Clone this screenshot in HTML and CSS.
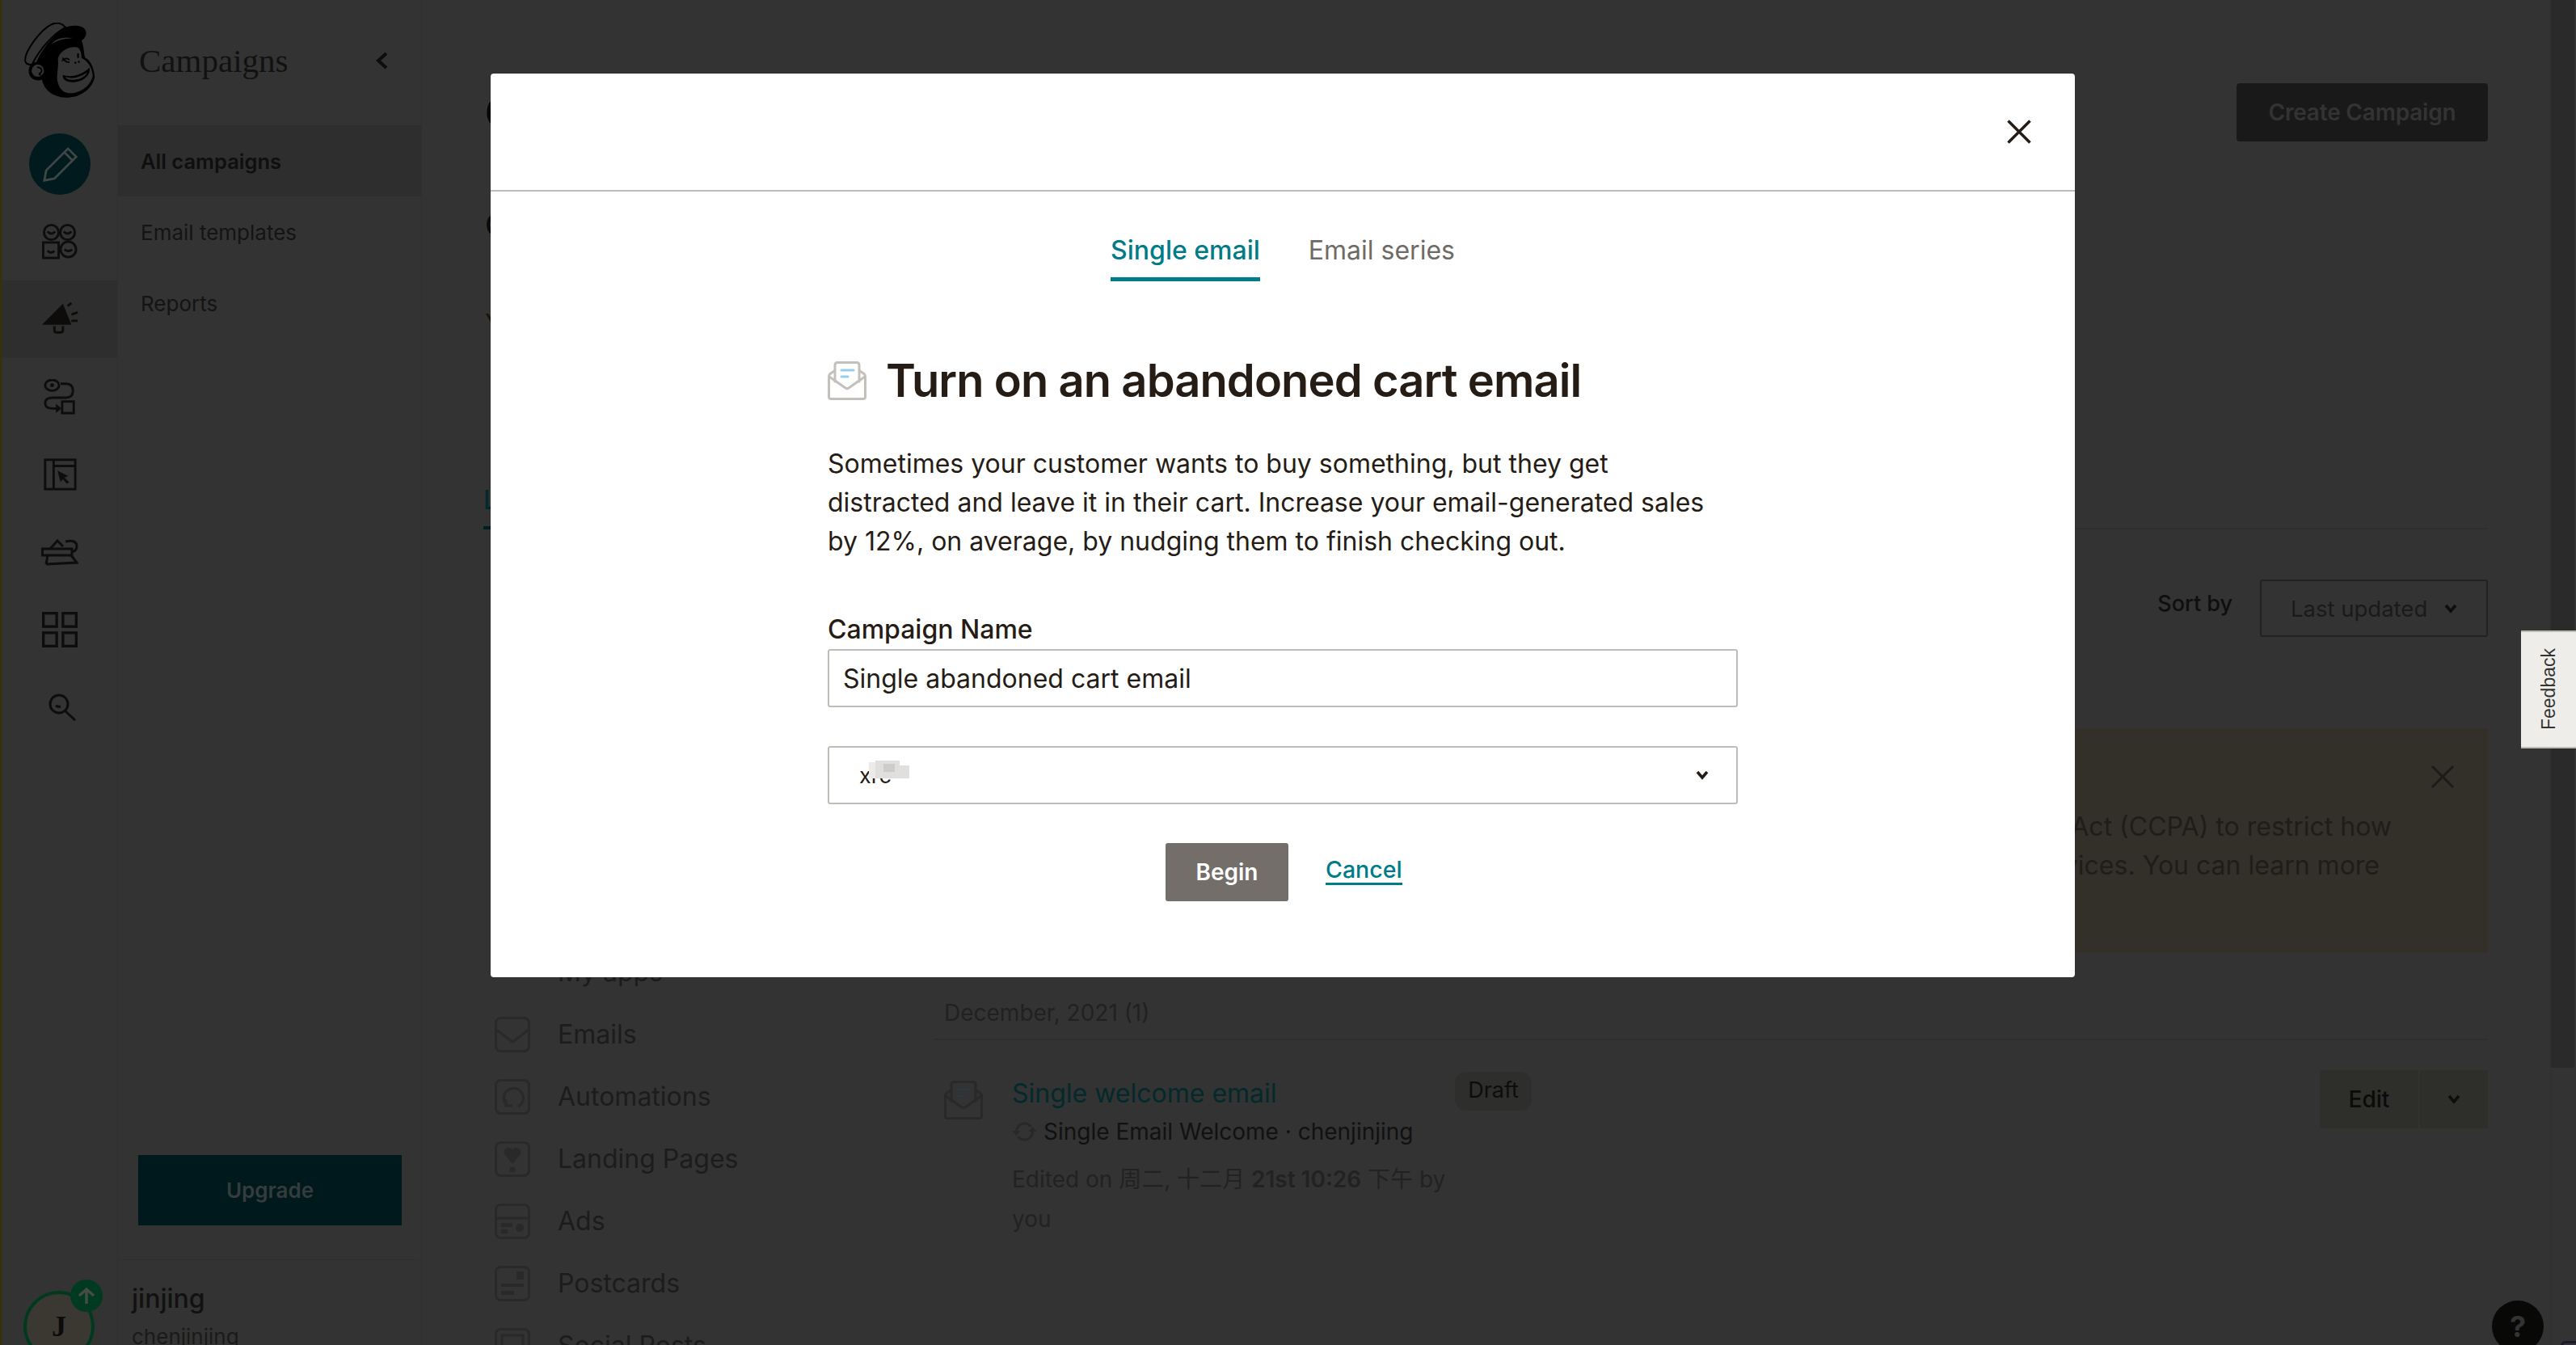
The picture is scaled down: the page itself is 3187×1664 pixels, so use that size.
FILE: index.html
```html
<!DOCTYPE html>
<html lang="en">
<head>
<meta charset="utf-8">
<title>Campaigns</title>
<link rel="stylesheet" href="styles.css">
</head>
<body>
<div class="app">
  <aside class="rail">
    <div class="rail-logo">
      <svg class="logo" viewBox="90 83 264 280">
        <path fill="#333" stroke="#000" stroke-width="6" d="M93 225C90 190 150 110 190 90C210 80 230 85 243 100C200 125 150 175 118 240C105 240 94 235 93 225Z"/>
        <path fill="#000" d="M243 100C270 90 318 90 320 120C320 138 310 145 303 150C315 180 310 205 318 215C340 225 350 260 352 285C345 330 295 365 245 362C195 360 165 335 155 295C130 305 105 290 106 260C108 240 120 232 135 230C150 190 195 130 243 100Z"/>
        <circle cx="140" cy="262" r="23" fill="#333"/>
        <path fill="none" stroke="#000" stroke-width="5" d="M137 250C155 248 160 265 147 272C143 274 148 280 152 276"/>
        <path fill="#333" d="M190 163C205 145 235 132 270 142C240 140 215 150 190 163Z"/>
        <path fill="#333" d="M215 220C218 195 250 170 285 175C298 178 303 195 303 215C325 225 342 250 345 280C335 325 290 350 250 345C225 340 210 310 212 280C213 260 218 240 215 220Z"/>
        <path fill="none" stroke="#000" stroke-width="5" d="M230 226C240 214 250 214 258 222M232 214C240 226 250 232 258 230"/>
        <path stroke="#000" stroke-width="7" stroke-linecap="round" d="M290 200V212M280 232V233M293 229V230"/>
        <path fill="#000" d="M233 278C265 290 310 275 332 250C340 275 310 305 270 305C245 305 232 295 233 278Z"/>
        <path fill="#333" d="M243 285C270 295 300 285 325 268C315 290 285 297 265 296C255 296 245 292 243 285Z"/>
      </svg>
    </div>
    <div class="rail-item">
      <span class="pen-circle">
        <svg class="icon-pen" viewBox="0 0 48 48"><path fill="none" stroke="#3e4646" stroke-width="2.500" d="M7 42L9 31L33 7L42 16L18 40ZM29 11L38 20"/></svg>
      </span>
    </div>
    <div class="rail-item">
      <svg class="icon-rail" viewBox="0 0 46 46"><g fill="none" stroke="#0d0d0d" stroke-width="3"><circle cx="12" cy="11" r="9.500"/><circle cx="33" cy="11" r="9.500"/><rect x="1.500" y="24" width="20" height="20"/><circle cx="34" cy="33" r="10"/><path d="M7 10q5 5 10 0M28 10q5 5 10 0M7 35q5 4 9 0M29 33q5 4 10 0"/></g></svg>
    </div>
    <div class="rail-item rail-active">
      <svg class="icon-rail" viewBox="0 0 46 46"><path fill="#0d0c0a" d="M0 30L27 3L38 30Z"/><path fill="none" stroke="#0d0c0a" stroke-width="3" d="M16 32v5q0 3 3 3h5q3 0 3-3v-5M33 6l5-4M38 17l8-3M38 25h8"/></svg>
    </div>
    <div class="rail-item">
      <svg class="icon-rail" viewBox="0 0 46 46"><g fill="none" stroke="#0d0d0d" stroke-width="3"><ellipse cx="13" cy="8" rx="9" ry="7"/><path d="M24 6h7q9 0 9 9t-9 9H14q-10 0-10 7t10 7h8"/><rect x="26" y="29" width="15" height="15"/></g><circle cx="13" cy="8" r="2.500" fill="#0d0d0d"/><path fill="#0d0d0d" d="M18 32l7 6-7 6Z"/></svg>
    </div>
    <div class="rail-item">
      <svg class="icon-rail" viewBox="0 0 46 46"><g fill="none" stroke="#0d0d0d" stroke-width="3"><rect x="4" y="4" width="39" height="38"/><path d="M15 4v38M15 12h28"/></g><path fill="#0d0d0d" d="M20 18l14 7-5 2 6 6-3 2-5-6-3 4Z"/></svg>
    </div>
    <div class="rail-item">
      <svg class="icon-rail" viewBox="0 0 46 34"><g fill="none" stroke="#0d0d0d" stroke-width="3"><path d="M1.500 13H38V21H1.500Z"/><path d="M11 13L20 3L27 10M6 32L8 21M6 32L44 30L37 21M30 4q14-3 14 6q0 6-7 7"/></g></svg>
    </div>
    <div class="rail-item">
      <svg class="icon-rail" viewBox="0 0 40 40"><g fill="none" stroke="#0d0d0d" stroke-width="3"><rect x="1.500" y="1.500" width="15" height="15"/><rect x="23.500" y="1.500" width="15" height="15"/><rect x="1.500" y="23.500" width="15" height="15"/><rect x="23.500" y="23.500" width="15" height="15"/></g></svg>
    </div>
    <div class="rail-item">
      <svg class="icon-search" viewBox="0 0 34 34"><g fill="none" stroke="#0d0d0d" stroke-width="3"><circle cx="13" cy="13" r="11"/><path d="M21 22L33 33M9 15q3 2 6 1"/></g></svg>
    </div>
    <div class="avatar-wrap">
      <div class="avatar">J</div>
      <span class="avatar-badge"><svg class="icon-up" viewBox="0 0 24 24"><path fill="none" stroke="#454b47" stroke-width="3.500" d="M12 22V4M3 12l9-8 9 8"/></svg></span>
    </div>
  </aside>

  <nav class="subnav">
    <div class="subnav-head">
      <span class="subnav-title">Campaigns</span>
      <svg class="icon-collapse" viewBox="0 0 16 22"><path fill="none" stroke="#0d0d0d" stroke-width="4" d="M14 2L4 11L14 20"/></svg>
    </div>
    <a class="subnav-link subnav-current">All campaigns</a>
    <a class="subnav-link">Email templates</a>
    <a class="subnav-link">Reports</a>
    <div class="subnav-spacer"></div>
    <button class="upgrade">Upgrade</button>
    <div class="account">
      <div class="account-name">jinjing</div>
      <div class="account-user">chenjinjing</div>
    </div>
  </nav>

  <main class="main">
    <header class="page-head">
      <h1 class="page-title">Campaigns</h1>
      <button class="create">Create Campaign</button>
    </header>
    <h2 class="page-sub">Campaigns overview</h2>
    <p class="page-desc">You have one draft</p>
    <div class="tabs-bg"><span class="tab-bg">Latest</span></div>
    <div class="sort-row">
      <span class="sort-label">Sort by</span>
      <span class="sort-select">Last updated
        <svg class="chev" viewBox="0 0 16 12"><path fill="none" stroke="#0d0d0d" stroke-width="3.500" d="M2 2l6 7 6-7"/></svg>
      </span>
    </div>
    <div class="columns">
      <div class="filters">
        <div class="filter filter-head"><span class="filter-icon-blank"></span>My apps</div>
        <div class="filter">
          <svg class="filter-icon" viewBox="0 0 44 44"><g fill="none" stroke="#292929" stroke-width="3"><rect x="1.500" y="1.500" width="41" height="41" rx="6"/><path d="M2 16l20 15 20-15"/></g></svg>Emails
        </div>
        <div class="filter">
          <svg class="filter-icon" viewBox="0 0 44 44"><g fill="none" stroke="#292929" stroke-width="3"><rect x="1.500" y="1.500" width="41" height="41" rx="6"/><path d="M29 34a12 12 0 1 0-14-2M14 25v8h8"/></g></svg>Automations
        </div>
        <div class="filter">
          <svg class="filter-icon" viewBox="0 0 44 44"><g fill="none" stroke="#292929" stroke-width="3"><rect x="1.500" y="1.500" width="41" height="41" rx="6"/></g><path fill="#292929" d="M22 28L12 16q-2-6 4-8q4-1 6 3q2-4 6-3q6 2 4 8Z"/><circle cx="22" cy="35" r="3.500" fill="#292929"/></svg>Landing Pages
        </div>
        <div class="filter">
          <svg class="filter-icon" viewBox="0 0 44 44"><g fill="none" stroke="#292929" stroke-width="3"><rect x="1.500" y="1.500" width="41" height="41" rx="6"/><path d="M2 18h40"/></g><path fill="#292929" d="M8 24h14v5H8ZM8 32h8v5H8Z"/><circle cx="31" cy="30" r="5" fill="#292929"/></svg>Ads
        </div>
        <div class="filter">
          <svg class="filter-icon" viewBox="0 0 44 44"><g fill="none" stroke="#292929" stroke-width="3"><rect x="1.500" y="1.500" width="41" height="41" rx="6"/></g><path fill="#292929" d="M27 7h9v10h-9ZM8 22h28v4H8ZM8 31h16v5H8Z"/></svg>Postcards
        </div>
        <div class="filter">
          <svg class="filter-icon" viewBox="0 0 44 44"><g fill="none" stroke="#292929" stroke-width="3"><rect x="1.500" y="1.500" width="41" height="41" rx="6"/><rect x="9" y="9" width="26" height="20"/></g></svg>Social Posts
        </div>
      </div>
      <div class="list">
        <div class="banner">
          <svg class="banner-close" viewBox="0 0 30 30"><path fill="none" stroke="#1c1b19" stroke-width="3" d="M1 1l28 28M29 1L1 29"/></svg>
          <div class="banner-text">
            <div>California Consumer Privacy Act (CCPA) to restrict how</div>
            <div class="banner-line2">Mailchimp provides our services. You can learn more</div>
          </div>
        </div>
        <div class="month">December, 2021 (1)</div>
        <div class="row">
          <svg class="row-icon" viewBox="0 0 48 48"><g fill="none" stroke="#292929" stroke-width="3" stroke-linecap="round"><path d="M8 12L2.500 16Q1.500 17 1.500 19V44Q1.500 46.500 4 46.500H44Q46.500 46.500 46.500 44V19Q46.500 17 45.500 16L40 12"/><path d="M2 19L22 33Q24 34.500 26 33L46 19"/><path d="M9 25V5Q9 1.500 12 1.500H36Q39 1.500 39 5V25"/><path stroke="#2b383d" d="M17 11H32M17 19H25"/></g></svg>
          <div class="row-body">
            <a class="row-title">Single welcome email</a>
            <div class="row-meta">
              <svg class="sync" viewBox="0 0 30 24"><g fill="none" stroke="#282828" stroke-width="3"><path d="M5 12a10 10 0 0 1 18-6M25 12a10 10 0 0 1-18 6"/></g><path fill="#282828" d="M0 11h10l-5 6ZM20 12h10l-5-6Z"/></svg>
              Single Email Welcome · chenjinjing
            </div>
            <div class="row-edited">Edited on 周二, 十二月 <b>21st 10:26</b> 下午 by you</div>
          </div>
          <span class="badge">Draft</span>
          <div class="split">
            <span class="split-main">Edit</span>
            <span class="split-arrow"><svg class="chev" viewBox="0 0 16 12"><path fill="none" stroke="#0d0d0d" stroke-width="3.500" d="M2 2l6 7 6-7"/></svg></span>
          </div>
        </div>
      </div>
    </div>
  </main>

  <div class="scrollbar"><div class="scroll-thumb"></div></div>
</div>

<div class="feedback"><span class="feedback-text">Feedback</span></div>
<div class="help">?</div>
<div class="corner"></div>

<section class="modal">
  <div class="modal-head">
    <svg class="modal-close" viewBox="0 0 30 30"><path fill="none" stroke="#241c15" stroke-width="3.500" d="M1.500 1.500l27 27M28.500 1.500l-27 27"/></svg>
  </div>
  <div class="modal-tabs">
    <a class="mtab mtab-on">Single email</a>
    <a class="mtab">Email series</a>
  </div>
  <div class="modal-body">
    <div class="modal-title-row">
      <svg class="modal-icon" viewBox="0 0 48 48"><g fill="none" stroke="#c4c1bd" stroke-width="3" stroke-linecap="round"><path d="M8 12L2.500 16Q1.500 17 1.500 19V44Q1.500 46.500 4 46.500H44Q46.500 46.500 46.500 44V19Q46.500 17 45.500 16L40 12"/><path d="M2 19L22 33Q24 34.500 26 33L46 19"/><path d="M9 25V5Q9 1.500 12 1.500H36Q39 1.500 39 5V25"/><path stroke="#95cfe9" d="M17 11H32M17 19H25"/></g></svg>
      <h2 class="modal-title">Turn on an abandoned cart email</h2>
    </div>
    <p class="modal-copy">Sometimes your customer wants to buy something, but they get distracted and leave it in their cart. Increase your email-generated sales by 12%, on average, by nudging them to finish checking out.</p>
    <label class="field-label">Campaign Name</label>
    <div class="field">Single abandoned cart email</div>
    <div class="field field-select">
      <span class="select-value">xrc
        <svg class="redact" viewBox="0 0 50 24"><path fill="#ecebea" d="M0 4h10v20H0Z"/><path fill="#e0dfdd" d="M8 2h14v22H8ZM22 2h16v22H22ZM36 8h14v16H36Z"/><path fill="#cdccca" d="M18 6h14v10H18Z"/></svg>
      </span>
      <svg class="chev-small" viewBox="0 0 16 12"><path fill="none" stroke="#241c15" stroke-width="3.500" d="M2 2l6 7 6-7"/></svg>
    </div>
    <div class="modal-actions">
      <button class="begin">Begin</button>
      <a class="cancel">Cancel</a>
    </div>
  </div>
</section>
</body>
</html>
```
FILE: styles.css
```css
* { box-sizing: border-box; }
html, body { margin: 0; height: 100%; overflow: hidden; }
body { background: #333; font-family: Inter, "Noto Sans CJK SC", sans-serif; color: #111; }
button { font-family: inherit; border: 0; padding: 0; }
h1, h2, p { margin: 0; }

.app { display: flex; height: 1664px; overflow: hidden; }

/* Icon rail */
.rail { width: 146px; flex: none; height: 1664px; overflow: hidden; border-left: 3px solid #37300f; border-right: 1px solid #2f2f2f; display: flex; flex-direction: column; }
.rail-logo { height: 155px; flex: none; padding: 28px 0 0 27px; }
.logo { display: block; width: 88px; height: 93px; }
.rail-item { height: 96px; flex: none; display: flex; align-items: center; justify-content: center; }
.rail-active { background: #2e2e2e; }
.pen-circle { width: 76px; height: 76px; border-radius: 50%; background: #001a1d; display: flex; align-items: center; justify-content: center; }
.icon-pen { width: 54px; height: 54px; }
.icon-rail { width: 46px; height: 44px; }
.icon-search { width: 34px; height: 34px; margin-left: 6px; }
.avatar-wrap { position: relative; flex: none; margin: 660px 0 0 26px; width: 88px; padding-top: 14px; }
.avatar { width: 88px; height: 88px; border-radius: 50%; border: 4px solid #003a1e; background: #3a3830; text-align: center; font: bold 36px/80px "Liberation Serif", serif; color: #0b0b0b; }
.avatar-badge { position: absolute; left: 58px; top: 0; width: 40px; height: 40px; border-radius: 50%; background: #003a20; display: flex; align-items: center; justify-content: center; }
.icon-up { width: 24px; height: 24px; }

/* Secondary nav */
.subnav { width: 376px; flex: none; border-right: 1px solid #2f2f2f; display: flex; flex-direction: column; height: 1664px; }
.subnav-head { height: 155px; flex: none; padding: 0 41px 5px 26px; display: flex; align-items: center; justify-content: space-between; }
.subnav-title { font: 41px/1 "Liberation Serif", serif; color: #111; }
.icon-collapse { width: 16px; height: 22px; }
.subnav-link { height: 88px; flex: none; padding-left: 28px; display: flex; align-items: center; font-size: 26px; color: #141414; }
.subnav-current { background: #2e2e2e; font-weight: 600; font-size: 25.500px; color: #0f0f0f; }
.subnav-spacer { flex: 1; }
.upgrade { flex: none; width: 326px; height: 87px; margin: 0 0 42px 25px; background: #00191c; color: #343c3d; font-size: 26px; font-weight: 600; }
.account { flex: none; height: 106px; margin-right: 4px; border-top: 1px solid #2f2f2f; padding: 28px 0 0 17px; overflow: hidden; }
.account-name { font-size: 32px; line-height: 40px; font-weight: 500; color: #111; }
.account-user { font-size: 26px; line-height: 40px; margin-top: 7px; color: #1a1a1a; }

/* Main page behind the modal */
.main { flex: 1; min-width: 0; padding: 103px 77px 0 78px; }
.page-head { height: 72px; display: flex; justify-content: space-between; }
.page-title { font: 58px/72px "Liberation Serif", serif; color: #060606; }
.create { width: 311px; height: 72px; border-radius: 4px; background: #191919; color: #333; font-size: 28px; font-weight: 600; letter-spacing: -0.2px; }
.page-sub { margin-top: 80px; font-size: 38px; line-height: 46px; font-weight: 500; color: #0b0b0b; }
.page-desc { margin-top: 76px; font-size: 32px; line-height: 48px; color: #1a1508; }
.tabs-bg { margin-top: 174px; height: 56px; border-bottom: 2px solid #2e2e2e; }
.tab-bg { display: inline-block; height: 56px; padding: 0 6px 0 0; margin-left: -2px; border-bottom: 4px solid #001f22; color: #00292d; font-size: 32px; font-weight: 500; }
.sort-row { margin-top: 62px; display: flex; justify-content: flex-end; align-items: flex-start; gap: 34px; }
.sort-label { font-size: 27px; line-height: 60px; font-weight: 500; color: #0e0e0e; }
.sort-select { width: 282px; height: 71px; border: 2px solid #222; border-radius: 3px; padding-left: 36px; padding-right: 36px; display: flex; align-items: center; justify-content: space-between; font-size: 27.500px; color: #1a1a1a; }
.chev { width: 16px; height: 12px; }

.columns { display: grid; grid-template-columns: 556px 1fr; margin-top: 113px; }
.filters { padding: 263px 0 0 12px; }
.filter { height: 77px; display: flex; align-items: center; gap: 34px; font-size: 32px; color: #1c1c1c; }
.filter-icon { width: 44px; height: 44px; flex: none; }
.filter-icon-blank { width: 44px; height: 44px; flex: none; }
.list { min-width: 0; }
.banner { height: 278px; background: #332f29; padding-right: 119px; position: relative; }
.banner-close { position: absolute; right: 41px; top: 46px; width: 30px; height: 28px; }
.banner-text { padding-top: 98px; font-size: 32px; line-height: 48px; color: #1e1d1a; text-align: right; white-space: nowrap; }
.banner-line2 { margin-right: 15px; }
.month { margin-top: 50px; height: 58px; line-height: 48px; padding-left: 12px; border-bottom: 2px solid #2e2e2e; font-size: 28px; color: #212121; }
.row { margin-top: 39px; display: flex; align-items: flex-start; }
.row-icon { width: 48px; height: 48px; flex: none; margin: 11px 0 0 12px; }
.row-body { width: 548px; flex: none; margin-left: 36px; color: #1e1e1e; }
.row-title { display: block; line-height: 54px; font-size: 32px; color: #03292c; }
.row-meta { display: flex; align-items: center; gap: 8px; line-height: 40px; font-size: 28px; color: #111; }
.sync { width: 31px; height: 24px; }
.row-edited { margin-top: 15px; font-size: 28px; line-height: 49px; color: #222; }
.row-edited b { font-weight: 600; }
.badge { flex: none; width: 95px; height: 48px; border-radius: 14px; background: #2e2e2c; text-align: center; font-size: 27px; line-height: 46px; color: #0d0d0d; }
.split { display: flex; margin-left: auto; height: 72px; margin-top: -2px; }
.split-main { width: 123px; background: #2e2e2b; border-right: 1px solid #333; text-align: center; font-size: 28px; font-weight: 500; line-height: 72px; color: #0b0b0b; }
.split-arrow { width: 85px; background: #2e2e2b; display: flex; align-items: center; justify-content: center; }

.scrollbar { width: 32px; flex: none; border-left: 1px solid #2f2f2f; height: 1664px; }
.scroll-thumb { width: 29px; height: 1321px; background: #2a2a2a; }

/* Fixed widgets */
.feedback { position: fixed; left: 3119px; top: 780px; width: 68px; height: 146px; background: #eeede9; border-top: 2px solid #bdbbb6; border-bottom: 2px solid #bdbbb6; display: flex; align-items: center; justify-content: center; }
.feedback-text { writing-mode: vertical-rl; transform: rotate(180deg); font: 23px/1 "Liberation Sans", sans-serif; color: #333; }
.help { position: fixed; left: 3083px; top: 1609px; width: 64px; height: 64px; border-radius: 50%; background: #080807; color: #333; text-align: center; font-size: 36px; font-weight: 700; line-height: 64px; }
.corner { position: fixed; left: 3168px; top: 1659px; width: 30px; height: 20px; border: 3px solid #1a1a2c; border-radius: 6px; }

/* Modal */
.modal { position: fixed; left: 607px; top: 91px; width: 1960px; height: 1118px; background: #fff; border-radius: 4px; color: #241c15; }
.modal-head { height: 146px; border-bottom: 2px solid #bcbcbc; display: flex; align-items: center; justify-content: flex-end; padding-right: 54px; }
.modal-close { width: 30px; height: 30px; }
.modal-tabs { display: flex; justify-content: center; gap: 60px; height: 112px; }
.mtab { height: 112px; padding-top: 54px; margin-top: -1px; font-size: 32px; line-height: 40px; color: #6e6a65; }
.mtab-on { color: #007c89; font-weight: 500; border-bottom: 5px solid #007c89; }
.modal-body { width: 1126px; margin: 0 0 0 417px; }
.modal-title-row { display: flex; align-items: center; gap: 24px; margin-top: 98px; height: 48px; }
.modal-icon { width: 48px; height: 48px; flex: none; }
.modal-title { font-size: 56px; line-height: 48px; font-weight: 600; letter-spacing: -0.9px; white-space: nowrap; }
.modal-copy { margin-top: 55px; font-size: 32px; line-height: 48px; }
.field-label { display: block; margin-top: 65px; font-size: 32px; line-height: 40px; font-weight: 500; }
.field { height: 72px; margin-top: 4px; border: 2px solid #c0bdb8; border-radius: 3px; padding: 0 17px; display: flex; align-items: center; font-size: 32px; }
.field-select { margin-top: 48px; padding: 0 34px 0 37px; justify-content: space-between; }
.select-value { position: relative; font-size: 27px; }
.redact { position: absolute; left: 12px; top: -4px; width: 50px; height: 24px; }
.chev-small { width: 16px; height: 12px; }
.modal-actions { display: flex; align-items: center; gap: 46px; margin: 48px 0 0 418px; }
.begin { width: 152px; height: 72px; border-radius: 3px; background: #736e69; color: #fff; font-size: 28px; font-weight: 600; }
.cancel { color: #007c89; font-size: 28.500px; font-weight: 500; line-height: 32px; border-bottom: 3px solid #007c89; margin-top: -4px; }
```
